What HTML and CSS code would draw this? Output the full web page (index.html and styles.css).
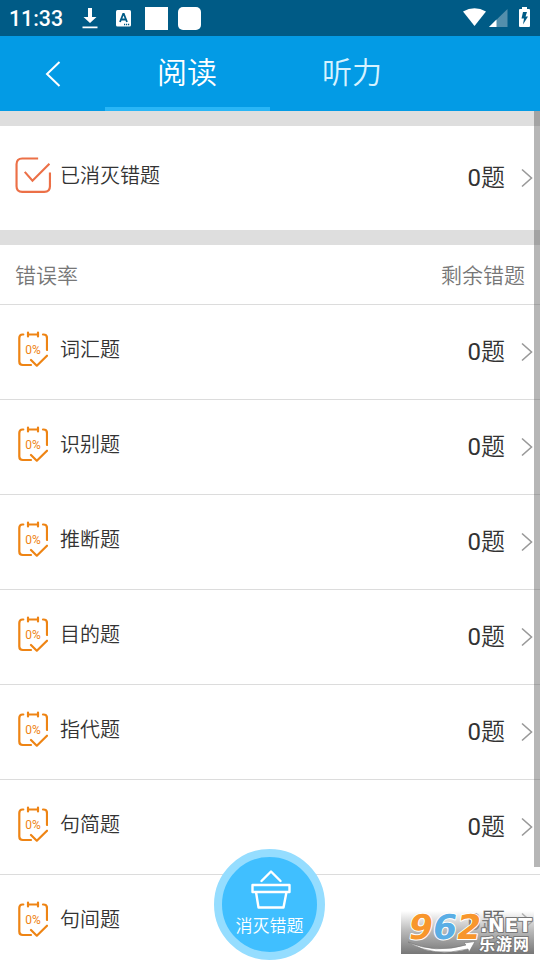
FILE: index.html
```
<!DOCTYPE html>
<html lang="zh-CN">
<head>
<meta charset="utf-8">
<title>错题</title>
<link rel="stylesheet" href="styles.css">
</head>
<body>
<svg class="defs" width="0" height="0">
  <symbol id="chevron" viewBox="0 0 12 20"><path d="M1 1.5 10.5 10 1 18.5" fill="none" stroke="#999" stroke-width="1.6"/></symbol>
  <symbol id="note" viewBox="0 0 30 36">
    <g fill="none" stroke="#ee8414" stroke-width="2.2" stroke-linecap="round" stroke-linejoin="round">
      <path d="M5.3 3.5H4.500Q1.300 3.500 1.300 7V30.500Q1.300 34 4.800 34H13"/>
      <path d="M25 3.5H25.5Q29 3.5 29 7V19"/>
      <path d="M10 3.5H20M10 1.5V5.5M20 1.5V5.5M13 29 18.800 34.700 29 24.700"/>
    </g>
  </symbol>
</svg>
<div class="screen">
  <header class="status">
    <span class="time">11:33</span>
    <svg class="download" viewBox="0 0 16 22"><path d="M6 1h4v9h4.500L8 16 1.500 10H6zM.5 19.500h15v1.800H.5z" fill="#fff"/></svg>
    <svg class="letter" viewBox="0 0 15 17"><rect width="15" height="16.500" rx="1.500" fill="#fff"/><path d="M4 12 7.200 4h.6L11 12M5 9.500h5" fill="none" stroke="#005b86" stroke-width="1.800"/><path d="M8 14.500h6" stroke="#005b86" stroke-width="1.300" stroke-dasharray="1.200 .8"/></svg>
    <i class="block"></i><i class="block round"></i>
    <svg class="signals" viewBox="0 0 68 22">
      <path d="M0 4.500Q11.500-2 23 4.500L11.500 19z" fill="#fff"/>
      <path d="M44.500 2V20H26z" fill="#548fac"/><path d="M33.500 12.500V20H26z" fill="#fff"/>
      <path d="M59 0h5v2h2q1 0 1 1v16q0 1-1 1h-9q-1 0-1-1V3q0-1 1-1h2z" fill="#fff"/>
      <path d="M60 5 58.500 11.500h2.500L60 17.500 65 9.500h-2.500L64 5z" fill="#005b86"/>
    </svg>
  </header>
  <nav class="tabs">
    <div class="back"><svg viewBox="0 0 16 26"><path d="M14.500 1 2 13 14.500 25" fill="none" stroke="#fff" stroke-width="2"/></svg></div>
    <div class="tab active">阅读</div>
    <div class="tab">听力</div>
  </nav>
  <main class="content">
    <section class="done">
      <svg class="check" viewBox="0 0 36 36"><path d="M22.500 1.500H7Q1.500 1.500 1.500 7V28.500Q1.500 34 7 34H28.500Q34 34 34 28.500V15M9.500 14.500 17 23 33.500 6.500" fill="none" stroke="#ec7047" stroke-width="2.100"/></svg>
      <span class="name">已消灭错题</span><span class="count"><span class="number">0</span>题</span><svg class="arrow"><use href="#chevron"/></svg>
    </section>
    <div class="heading"><span>错误率</span><span>剩余错题</span></div>
    <div class="row"><div class="rate"><svg><use href="#note"/></svg><b>0%</b></div><span class="name">词汇题</span><span class="count"><span class="number">0</span>题</span><svg class="arrow"><use href="#chevron"/></svg></div>
    <div class="row"><div class="rate"><svg><use href="#note"/></svg><b>0%</b></div><span class="name">识别题</span><span class="count"><span class="number">0</span>题</span><svg class="arrow"><use href="#chevron"/></svg></div>
    <div class="row"><div class="rate"><svg><use href="#note"/></svg><b>0%</b></div><span class="name">推断题</span><span class="count"><span class="number">0</span>题</span><svg class="arrow"><use href="#chevron"/></svg></div>
    <div class="row"><div class="rate"><svg><use href="#note"/></svg><b>0%</b></div><span class="name">目的题</span><span class="count"><span class="number">0</span>题</span><svg class="arrow"><use href="#chevron"/></svg></div>
    <div class="row"><div class="rate"><svg><use href="#note"/></svg><b>0%</b></div><span class="name">指代题</span><span class="count"><span class="number">0</span>题</span><svg class="arrow"><use href="#chevron"/></svg></div>
    <div class="row"><div class="rate"><svg><use href="#note"/></svg><b>0%</b></div><span class="name">句简题</span><span class="count"><span class="number">0</span>题</span><svg class="arrow"><use href="#chevron"/></svg></div>
    <div class="row"><div class="rate"><svg><use href="#note"/></svg><b>0%</b></div><span class="name">句间题</span><span class="count"><span class="number">0</span>题</span><svg class="arrow"><use href="#chevron"/></svg></div>
  </main>
  <div class="scrollbar"></div>
  <div class="clear-button">
    <svg viewBox="0 0 40 40"><path d="M10.500 12 20 2.500 29.500 12M1.500 16H38.500V23H1.500zM5 23 7.500 38.500H32.500L35.500 23" fill="none" stroke="#fff" stroke-width="2.400" stroke-linejoin="round" stroke-linecap="round"/></svg>
    <span>消灭错题</span>
  </div>
  <div class="watermark">
    <svg viewBox="0 0 133 43">
      <g class="digits" transform="translate(5 0) skewX(-10)"><text x="6" y="28" textLength="72" lengthAdjust="spacingAndGlyphs"><tspan fill="#f8962c">9</tspan><tspan fill="#5aaee5">6</tspan><tspan fill="#f8962c">2</tspan></text></g>
      <text class="net" x="79" y="21" textLength="52" lengthAdjust="spacingAndGlyphs">.NET</text>
      <path d="M7 31Q34 43 65 34L63 32 74 30.500 68 41 67 38Q32 47 7 31z" fill="#fff" stroke="#777" stroke-width=".6"/>
      <text class="site" x="78" y="39" textLength="50">乐游网</text>
    </svg>
  </div>
</div>
</body>
</html>
```
FILE: styles.css
```
* { box-sizing: border-box; }
body { margin: 0; font-family: Roboto, "Noto Sans CJK SC", sans-serif; font-weight: 350; color: #333; }
.defs { position: absolute; }
.screen { position: relative; width: 540px; height: 960px; overflow: hidden; background: #fff; }
.status { display: flex; align-items: center; height: 36px; padding-left: 9px; background: #005b86; color: #fff; }
.time { width: 73px; font-size: 21.3px; font-weight: 500; line-height: 36px; padding-top: 2px; }
.download { width: 16px; height: 22px; margin-right: 18px; }
.letter { width: 15px; height: 17px; margin-right: 14px; }
.block { width: 23px; height: 23px; margin: 1px 10px 0 0; background: #fff; }
.round { border-radius: 5px; }
.signals { width: 68px; height: 22px; margin: 0 9px 0 auto; }
.tabs { display: flex; height: 75px; background: #039be5; color: #fff; }
.back { width: 105px; padding: 25px 0 0 45px; }
.back svg { display: block; width: 16px; height: 26px; }
.tab { width: 165px; height: 75px; padding-right: 1px; font-size: 30px; line-height: 73px; text-align: center; color: #d5f2ff; }
.active { border-bottom: 4px solid #29b6f6; color: #fff; }
.content { background: #fff; }
.done { display: flex; align-items: center; height: 134px; border-top: 15px solid #dedede; border-bottom: 15px solid #dedede; padding: 0 7px 0 15px; }
.check { width: 37px; height: 37px; margin: -5px 8px 0 0; }
.name { flex: 1; font-size: 20px; line-height: 30px; padding-bottom: 4px; }
.count { font-size: 24px; line-height: 34px; margin-right: 16px; }
.number { font-weight: 400; }
.arrow { width: 12px; height: 20px; }
.heading { display: flex; justify-content: space-between; height: 60px; padding: 0 15px; border-bottom: 1px solid #dcdcdc; color: #777; font-size: 21px; line-height: 63px; }
.row { display: flex; align-items: center; height: 95px; padding: 0 7px 0 18px; border-bottom: 1px solid #dcdcdc; }
.rate { position: relative; width: 30px; height: 36px; margin: -6px 12px 0 0; }
.rate svg { display: block; width: 30px; height: 36px; }
.rate b { position: absolute; inset: 12px 0 auto; text-align: center; font-size: 12px; line-height: 14px; font-weight: 400; color: #ee8414; }
.scrollbar { position: absolute; top: 111px; right: 0; width: 6px; height: 756px; background: rgba(80, 80, 80, .42); }
.clear-button { position: absolute; left: 214px; top: 849px; width: 111px; height: 111px; border: 8.5px solid #95ddff; border-radius: 50%; background: #40bfff; color: #fff; text-align: center; }
.clear-button svg { display: block; width: 40px; height: 40px; margin: 12px auto 0; position: relative; left: 1px; }
.clear-button span { display: block; font-size: 17px; line-height: 24px; margin-top: 5px; white-space: nowrap; }
.watermark { position: absolute; left: 401px; top: 911px; width: 133px; height: 43px; background: linear-gradient(rgba(255, 255, 255, .25), rgba(170, 170, 170, .8) 45%, #777); }
.watermark svg { display: block; width: 133px; height: 43px; }
.watermark text { paint-order: stroke; stroke-linejoin: round; }
.digits { font: 700 34px "DejaVu Sans", sans-serif; stroke: #fff; stroke-width: 2px; }
.net { font: 700 19px "DejaVu Sans", sans-serif; fill: #fff; stroke: #777; stroke-width: 2px; }
.site { font: 700 16px "Noto Sans CJK SC", sans-serif; fill: #fff; stroke: #777; stroke-width: 2px; }
```
